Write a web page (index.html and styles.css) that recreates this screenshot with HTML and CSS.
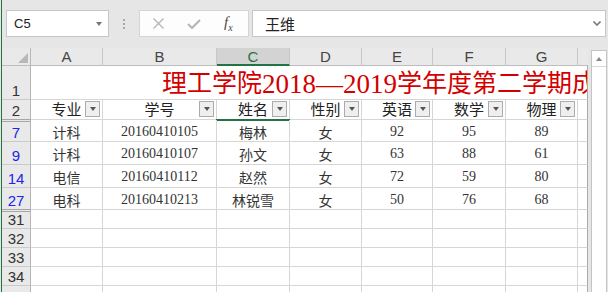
FILE: index.html
```html
<!DOCTYPE html>
<html lang="zh-CN">
<head>
    <meta charset="UTF-8">
    <title>成绩表</title>
    <link rel="stylesheet" href="styles.css">
</head>
<body>
    <div class="edge"></div>
    <div class="app">
        <div class="toolbar">
            <div class="namebox"><span>C5</span><span class="caret"></span></div>
            <div class="grip"><i></i><i></i><i></i></div>
            <div class="fbtns">
                <svg class="ico-x" width="11" height="11" viewBox="0 0 11 11"><path d="M0.5 0.5L10.5 10.5M10.5 0.5L0.5 10.5" stroke="#b4b4b4" stroke-width="1.3" fill="none"/></svg>
                <svg class="ico-ok" width="14" height="10" viewBox="0 0 14 10"><path d="M1 5L5 9L13 1" stroke="#b4b4b4" stroke-width="2" fill="none"/></svg>
                <span class="fx">f<sub>x</sub></span>
            </div>
            <div class="finput">
                <span>王维</span>
                <svg width="8" height="5" viewBox="0 0 8 5"><path d="M0.5 0.5L4 4L7.5 0.5" stroke="#7a7a7a" stroke-width="1.6" fill="none"/></svg>
            </div>
        </div>

        <div class="sheet">
            <div class="grid">
                <!-- column headers -->
                <div class="corner"></div>
                <div class="ch">A</div>
                <div class="ch">B</div>
                <div class="ch sel">C</div>
                <div class="ch">D</div>
                <div class="ch">E</div>
                <div class="ch">F</div>
                <div class="ch">G</div>
                <div class="ch end"></div>

                <!-- row 1 -->
                <div class="rh">1</div>
                <div class="title">理工学院<span class="num">2018—2019</span>学年度第二学期成绩表</div>

                <!-- row 2 -->
                <div class="rh hid-below">2</div>
                <div class="hd">专业<span class="fb"></span></div>
                <div class="hd">学号<span class="fb"></span></div>
                <div class="hd cur">姓名<span class="fb"></span></div>
                <div class="hd">性别<span class="fb"></span></div>
                <div class="hd">英语<span class="fb"></span></div>
                <div class="hd">数学<span class="fb"></span></div>
                <div class="hd">物理<span class="fb"></span></div>
                <div class="h"></div>

                <!-- row 7 -->
                <div class="rh f hid-above">7</div>
                <div class="c">计科</div>
                <div class="c">20160410105</div>
                <div class="c">梅林</div>
                <div class="c">女</div>
                <div class="c">92</div>
                <div class="c">95</div>
                <div class="c">89</div>
                <div class="h"></div>

                <!-- row 9 -->
                <div class="rh f">9</div>
                <div class="c">计科</div>
                <div class="c">20160410107</div>
                <div class="c">孙文</div>
                <div class="c">女</div>
                <div class="c">63</div>
                <div class="c">88</div>
                <div class="c">61</div>
                <div class="h"></div>

                <!-- row 14 -->
                <div class="rh f">14</div>
                <div class="c">电信</div>
                <div class="c">20160410112</div>
                <div class="c">赵然</div>
                <div class="c">女</div>
                <div class="c">72</div>
                <div class="c">59</div>
                <div class="c">80</div>
                <div class="h"></div>

                <!-- row 27 -->
                <div class="rh f hid-below">27</div>
                <div class="c">电科</div>
                <div class="c">20160410213</div>
                <div class="c">林锐雪</div>
                <div class="c">女</div>
                <div class="c">50</div>
                <div class="c">76</div>
                <div class="c">68</div>
                <div class="h"></div>

                <!-- empty rows -->
                <div class="rh hid-above">31</div>
                <div></div><div></div><div></div><div></div><div></div><div></div><div></div><div class="h"></div>
                <div class="rh">32</div>
                <div></div><div></div><div></div><div></div><div></div><div></div><div></div><div class="h"></div>
                <div class="rh">33</div>
                <div></div><div></div><div></div><div></div><div></div><div></div><div></div><div class="h"></div>
                <div class="rh">34</div>
                <div></div><div></div><div></div><div></div><div></div><div></div><div></div><div class="h"></div>
                <div class="rh"></div>
                <div></div><div></div><div></div><div></div><div></div><div></div><div></div><div class="h"></div>
            </div>
            <div class="vgap"></div>
            <div class="vscroll">
                <div class="up"><span class="up-arrow"></span></div>
            </div>
        </div>
    </div>
</body>
</html>
```

FILE: styles.css
```css
body {
    margin: 0;
    height: 292px;
    overflow: hidden;
    display: flex;
    background: #e6e6e6;
    font-family: "Liberation Sans", "Noto Sans CJK SC", sans-serif;
}
.edge {
    width: 1px;
    margin-left: 1px;
    background: #217346;
}
.app {
    width: 606px;
}

/* formula bar */
.toolbar {
    height: 48px;
    box-sizing: border-box;
    padding-top: 10px;
    display: flex;
    align-items: flex-start;
}
.namebox {
    margin-left: 4px;
    width: 103px;
    height: 27px;
    box-sizing: border-box;
    border: 1px solid #c6c6c6;
    background: #fff;
    display: flex;
    align-items: center;
    justify-content: space-between;
    padding: 0 6px 0 7px;
    font-size: 13px;
    color: #222;
}
.caret {
    width: 0;
    height: 0;
    border-left: 3.5px solid transparent;
    border-right: 3.5px solid transparent;
    border-top: 4px solid #777;
}
.grip {
    margin: 9px 0 0 14px;
    width: 2px;
    display: flex;
    flex-direction: column;
    gap: 2px;
}
.grip i {
    width: 2px;
    height: 2px;
    background: #a8a8a8;
}
.fbtns {
    margin-left: 14px;
    width: 110px;
    height: 27px;
    box-sizing: border-box;
    border: 1px solid #d5d5d5;
    background: #fdfdfd;
    display: flex;
    align-items: center;
}
.ico-x {
    margin-left: 13px;
}
.ico-ok {
    margin-left: 23px;
}
.fx {
    margin-left: 23px;
    font-family: "Liberation Serif", serif;
    font-style: italic;
    font-size: 15px;
    color: #4a4a4a;
}
.fx sub {
    font-size: 10px;
}
.finput {
    margin-left: 3px;
    width: 354px;
    height: 27px;
    box-sizing: border-box;
    border: 1px solid #c6c6c6;
    background: #fff;
    display: flex;
    align-items: center;
    justify-content: space-between;
    padding: 0 4px 0 12px;
    font-size: 15px;
    color: #222;
}

/* sheet */
.sheet {
    display: flex;
    height: 244px;
}
.grid {
    width: 586px;
    height: 244px;
    overflow: hidden;
    display: grid;
    grid-template-columns: 29px 72px 114px 73px 72px 71px 73px 72px 10px;
    grid-template-rows: 18px 34px 20px 22px 23px 23px 22px 19px 19px 19px 19px 19px;
    background: #fff;
}
.grid > div {
    box-sizing: border-box;
    border-right: 1px solid #d6d6d6;
    border-bottom: 1px solid #d6d6d6;
    display: flex;
    align-items: center;
    justify-content: center;
    position: relative;
}
.grid > .corner {
    background: #e9e9e9;
    border-right-color: #b8b8b8;
    border-bottom-color: #bdbdbd;
}
.corner::after {
    content: "";
    position: absolute;
    right: 2px;
    bottom: 2px;
    border-left: 10px solid transparent;
    border-bottom: 10px solid #b8b8b8;
}
.grid > .ch {
    background: #e9e9e9;
    border-right-color: #c8c8c8;
    border-bottom-color: #bdbdbd;
    color: #444;
    font-size: 15px;
}
.grid > .ch.sel {
    background: #d3d3d3;
    color: #217346;
    border-bottom: 2px solid #217346;
}
.grid > .ch.end {
    border-right: none;
}
.grid > .rh {
    background: #e9e9e9;
    border-right-color: #b4b4b4;
    border-bottom-color: #cacaca;
    color: #333;
    font-size: 15px;
    align-items: flex-end;
    line-height: 17px;
}
.grid > .rh.f {
    color: #2222ee;
}
.grid > .hid-below {
    border-bottom-color: #a6a6a6;
}
.grid > .hid-above {
    background: linear-gradient(#a6a6a6, #a6a6a6) 0 1px / 100% 1px no-repeat, #e9e9e9;
}
.grid > .title {
    grid-column: span 8;
    justify-content: flex-start;
    align-items: flex-end;
    padding-left: 131px;
    overflow: hidden;
    white-space: nowrap;
    border-right-color: #ababab;
    color: #d40000;
    font-family: "Liberation Serif", "Noto Sans CJK SC", serif;
    font-size: 25px;
    line-height: 30px;
}
.title .num {
    font-size: 27px;
}
.grid > .hd {
    font-size: 15px;
    color: #222;
    align-items: flex-end;
    line-height: 18px;
}
.fb {
    position: absolute;
    right: 2px;
    bottom: 2px;
    width: 15px;
    height: 16px;
    box-sizing: border-box;
    border: 1px solid #acacac;
    background: #efefef;
    display: flex;
    align-items: center;
    justify-content: center;
}
.fb::after {
    content: "";
    border-left: 3.5px solid transparent;
    border-right: 3.5px solid transparent;
    border-top: 4px solid #555;
}
.cur::after {
    content: "";
    position: absolute;
    left: -1px;
    right: -1px;
    bottom: -2px;
    height: 2px;
    background: #217346;
}
.grid > .c {
    font-family: "Liberation Serif", "Noto Sans CJK SC", serif;
    font-size: 14px;
    color: #333;
    padding-top: 2px;
}
.grid > .h {
    border-right-color: #ababab;
}

/* scrollbar */
.vgap {
    width: 3px;
}
.vscroll {
    width: 16px;
    margin-top: 2px;
    box-sizing: border-box;
    border: 1px solid #c4c4c4;
    border-bottom: none;
    background: #fff;
}
.up {
    height: 15px;
    border-bottom: 1px solid #d8d8d8;
    display: flex;
    align-items: center;
    justify-content: center;
}
.up-arrow {
    border-left: 3.5px solid transparent;
    border-right: 3.5px solid transparent;
    border-bottom: 4px solid #888;
}
```
